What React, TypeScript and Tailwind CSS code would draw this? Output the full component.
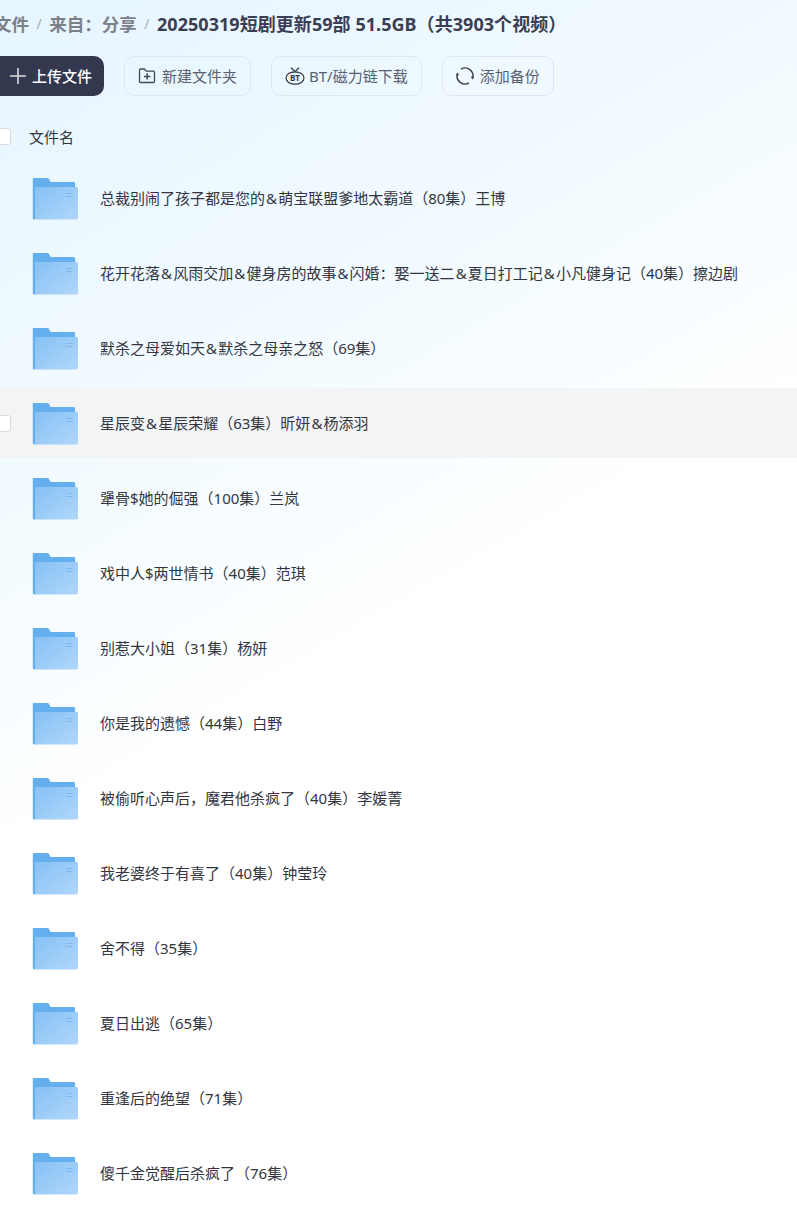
import React from 'react';

const files = [
  '总裁别闹了孩子都是您的&萌宝联盟爹地太霸道（80集）王博',
  '花开花落&风雨交加&健身房的故事&闪婚：娶一送二&夏日打工记&小凡健身记（40集）擦边剧',
  '默杀之母爱如天&默杀之母亲之怒（69集）',
  '星辰变&星辰荣耀（63集）昕妍&杨添羽',
  '犟骨$她的倔强（100集）兰岚',
  '戏中人$两世情书（40集）范琪',
  '别惹大小姐（31集）杨妍',
  '你是我的遗憾（44集）白野',
  '被偷听心声后，魔君他杀疯了（40集）李媛菁',
  '我老婆终于有喜了（40集）钟莹玲',
  '舍不得（35集）',
  '夏日出逃（65集）',
  '重逢后的绝望（71集）',
  '傻千金觉醒后杀疯了（76集）',
];

const FolderIcon = ({ id }: { id: number }) => (
  <svg width="46" height="42" viewBox="0 0 46 42" className="shrink-0">
    <defs>
      <linearGradient id={`front${id}`} x1="0" y1="0" x2="1" y2="1">
        <stop offset="0" stopColor="#86c1f4" />
        <stop offset="1" stopColor="#b0d7fb" />
      </linearGradient>
    </defs>
    <path d="M1.8 0h13.4c.9 0 1.4.4 1.8 1l1.6 3H41.5c1 0 1.6.6 1.6 1.6V12H3v29.4H2.4c-1 0-1.6-.6-1.6-1.6V1c0-.6.4-1 1-1z" fill="#65afee" />
    <path d="M3 9h41.4c.9 0 1.6.7 1.6 1.6v29.2c0 1-.6 1.6-1.6 1.6H3z" fill={`url(#front${id})`} />
    <rect x="34" y="15" width="6.5" height="1" fill="#7db9ef" />
    <rect x="34" y="18" width="6.5" height="1" fill="#7db9ef" />
  </svg>
);

const ToolButton = ({ icon, label }: { icon: React.ReactNode; label: string }) => (
  <button className="flex h-10 items-center gap-[6px] rounded-[10px] border border-[#dfe6ec] px-[13px] text-[15px] text-[#5b606e]">
    {icon}
    {label}
  </button>
);

export default function App() {
  return (
    <div
      className="h-[1221px] w-[797px] overflow-hidden bg-[linear-gradient(150deg,#e6f5ff_0%,#f3fbff_32%,#ffffff_52%)] text-[#33363f]"
      style={{ fontFamily: '"Noto Sans", "Noto Sans CJK SC", sans-serif' }}
    >
      <div className="-ml-[6px] flex h-[48px] items-center whitespace-nowrap text-[17.5px] font-bold text-[#7c8089]">
        <span>文件</span>
        <span className="mx-[7.5px] text-sm font-normal text-[#a9adb5]">/</span>
        <span>来自：分享</span>
        <span className="mx-[7.5px] text-sm font-normal text-[#a9adb5]">/</span>
        <span className="text-[18px] tracking-[0.05px] text-[#3a3e53]">20250319短剧更新59部 51.5GB（共3903个视频）</span>
      </div>

      <div className="mt-2 flex gap-5">
        <button className="-ml-[12px] flex h-10 w-[116px] items-center justify-end gap-[6px] rounded-[10px] bg-[#33384f] pr-3 text-[15px] font-medium text-white">
          <svg width="16" height="16" viewBox="0 0 16 16" stroke="#dcdee4" strokeWidth="1.6">
            <path d="M8 0v16M0 8h16" />
          </svg>
          上传文件
        </button>
        <ToolButton
          label="新建文件夹"
          icon={
            <svg width="18" height="16" viewBox="0 0 18 16" fill="none" stroke="#444852" strokeWidth="1.3">
              <path d="M1.5 2.2c0-.8.5-1.2 1.2-1.2h3.8l1.7 2.2h7.1c.8 0 1.2.5 1.2 1.2v9c0 .7-.4 1.1-1.2 1.1H2.7c-.7 0-1.2-.4-1.2-1.1z" />
              <path d="M9.2 5.2v6.4M6 8.4h6.4" strokeWidth="1.5" />
            </svg>
          }
        />
        <ToolButton
          label="BT/磁力链下载"
          icon={
            <svg width="20" height="18" viewBox="0 0 20 18" fill="none" stroke="#33363f" strokeWidth="1.2" className="-mr-[2px]">
              <ellipse cx="10" cy="11" rx="9" ry="6.2" />
              <path d="M6 .8 10 4.6 14 .8" />
              <text x="10" y="13.8" textAnchor="middle" fontSize="8" fontWeight="700" fill="#33363f" stroke="none">BT</text>
            </svg>
          }
        />
        <ToolButton
          label="添加备份"
          icon={
            <svg width="18" height="18" viewBox="0 0 18 18" fill="none" stroke="#3d414c" strokeWidth="1.4">
              <path d="M5 2.07A8 8 0 0 1 16.7 11.07" />
              <path d="M13 15.93A8 8 0 0 1 1.27 6.93" />
              <path d="M14.6 9.8 16.8 12.6 18 9.6z" fill="#3d414c" stroke="none" />
              <path d="M0 8.4 1.2 5.4 3.4 8.2z" fill="#3d414c" stroke="none" />
            </svg>
          }
        />
      </div>

      <div className="mt-[23px] flex h-9 items-center">
        <span className="-ml-[6px] -mt-[2px] h-[17px] w-[17px] rounded-[3px] border border-[#d9d9d9] bg-white" />
        <span className="ml-[18px] text-[15px] text-[#33363f]">文件名</span>
      </div>

      <div className="mt-[8px] flex flex-col gap-[5px]">
        {files.map((name, i) => (
          <div key={name} className={`relative flex h-[70px] items-center ${i === 3 ? 'bg-[#f3f4f6]' : ''}`}>
            {i === 3 && (
              <span className="absolute -left-[6px] top-[27px] h-[17px] w-[17px] rounded-[3px] border border-[#d9d9d9] bg-white" />
            )}
            <div className="ml-[32px] mt-[1px]">
              <FolderIcon id={i} />
            </div>
            <span className="ml-[22px] whitespace-nowrap text-[15px] text-[#33363f]">
              {name.split('&').map((part, j) => (
                <React.Fragment key={j}>
                  {j > 0 && <span className="px-[1.1px]">&amp;</span>}
                  {part}
                </React.Fragment>
              ))}
            </span>
          </div>
        ))}
      </div>
    </div>
  );
}
